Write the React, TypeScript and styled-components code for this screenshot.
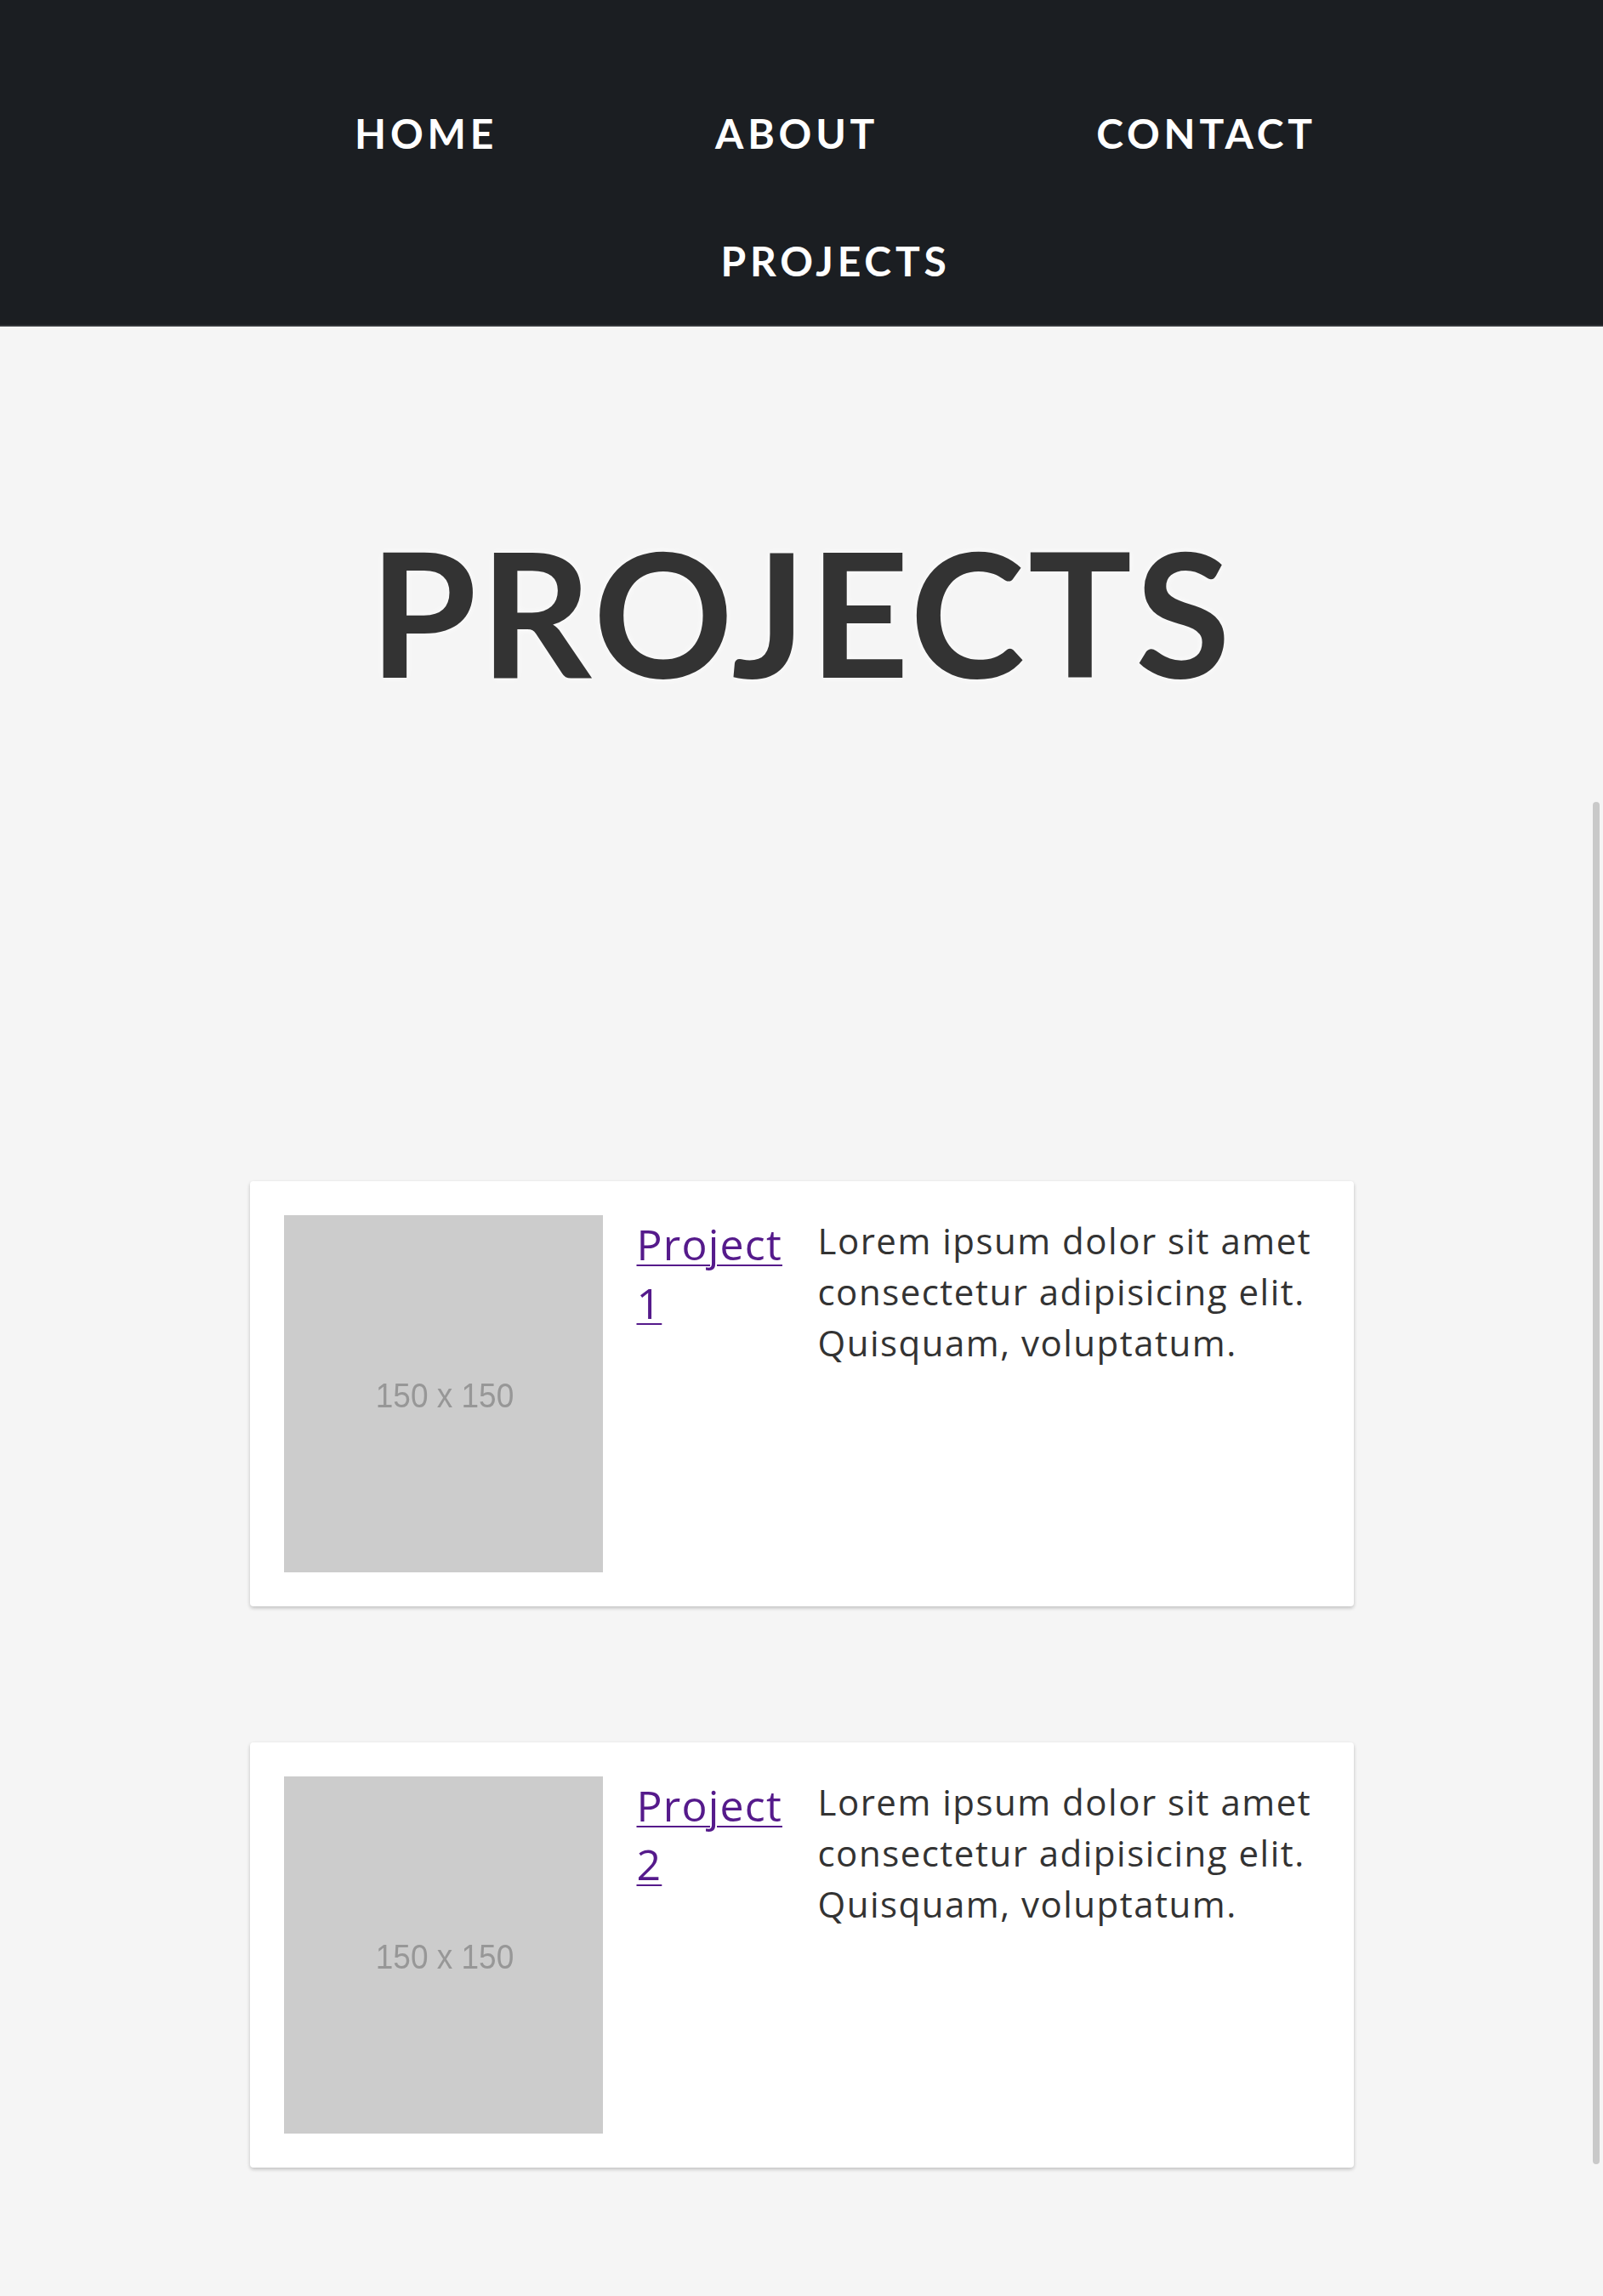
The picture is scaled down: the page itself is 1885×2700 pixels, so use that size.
import React from "react";
import styled, { createGlobalStyle } from "styled-components";

const GlobalStyle = createGlobalStyle`
  html, body {
    margin: 0;
    padding: 0;
    background: #f5f5f5;
  }
  body {
    font-family: "Open Sans", "Noto Sans", sans-serif;
    color: #333;
  }
`;

const Page = styled.div`
  min-height: 2700px;
  background: #f5f5f5;
`;

const Nav = styled.nav`
  background: #1b1e22;
  border-bottom: 2px solid #34373b;
  padding-top: 82px;
`;

const NavList = styled.ul`
  list-style: none;
  margin: 0;
  padding: 0 0 0 80px;
  display: flex;
  flex-wrap: wrap;
  justify-content: center;
`;

const NavItem = styled.li`
  padding: 0 128px;
`;

const NavLink = styled.a`
  display: block;
  font-family: Lato, "Open Sans", sans-serif;
  font-weight: 700;
  font-size: 48px;
  line-height: 150px;
  letter-spacing: 0.1em;
  color: #ffffff;
  text-decoration: none;
  text-transform: uppercase;
`;

const Title = styled.h1`
  margin: 0;
  padding-top: 212px;
  text-align: center;
  font-family: Lato, "Open Sans", sans-serif;
  font-weight: 700;
  font-size: 204px;
  line-height: 245px;
  letter-spacing: 4px;
  color: #333333;
  text-shadow: 0 0 8px rgba(255, 255, 255, 0.9);
`;

const CardList = styled.section`
  display: flex;
  flex-direction: column;
  align-items: center;
  gap: 160px;
  padding: 548px 0 150px;
`;

const Card = styled.article`
  width: 1298px;
  box-sizing: border-box;
  padding: 40px;
  display: flex;
  align-items: flex-start;
  gap: 40px;
  background: #ffffff;
  border-radius: 4px;
  box-shadow: 0 2px 4px rgba(0, 0, 0, 0.22);
`;

const Placeholder = styled.div`
  flex: 0 0 375px;
  height: 420px;
  background: #cccccc;
  display: flex;
  align-items: center;
  justify-content: center;
  overflow: hidden;
`;

const PlaceholderText = styled.span`
  font-family: "Liberation Sans", Arial, sans-serif;
  font-size: 37px;
  color: #979797;
  transform: scaleY(1.1);
  filter: blur(0.7px);
  margin-left: 4px;
  margin-top: 6px;
`;

const ProjectLink = styled.a`
  flex: 0 0 173px;
  font-family: "Open Sans", "Noto Sans", sans-serif;
  font-size: 50px;
  line-height: 69px;
  letter-spacing: 1.2px;
  color: #551a8b;
  text-decoration: underline;
  text-decoration-thickness: 2px;
  text-underline-offset: 5px;
`;

const Description = styled.p`
  flex: 1;
  margin: 0;
  font-family: "Open Sans", "Noto Sans", sans-serif;
  font-size: 42px;
  line-height: 60px;
  letter-spacing: 1.5px;
  color: #333333;
`;

const ScrollThumb = styled.div`
  position: absolute;
  right: 4px;
  top: 943px;
  width: 8px;
  height: 1602px;
  border-radius: 4px;
  background: #c9c9c9;
`;

const Root = styled.div`
  position: relative;
`;

const navItems = ["Home", "About", "Contact", "Projects"];

const projects = [
  { name: "Project 1" },
  { name: "Project 2" },
];

export default function App() {
  return (
    <Root>
      <GlobalStyle />
      <Page>
        <Nav>
          <NavList>
            {navItems.map((item) => (
              <NavItem key={item}>
                <NavLink href="#">{item}</NavLink>
              </NavItem>
            ))}
          </NavList>
        </Nav>
        <Title>PROJECTS</Title>
        <CardList>
          {projects.map((p) => (
            <Card key={p.name}>
              <Placeholder>
                <PlaceholderText>150 x 150</PlaceholderText>
              </Placeholder>
              <ProjectLink href="#">{p.name}</ProjectLink>
              <Description>
                Lorem ipsum dolor sit amet consectetur adipisicing elit. Quisquam, voluptatum.
              </Description>
            </Card>
          ))}
        </CardList>
      </Page>
      <ScrollThumb />
    </Root>
  );
}
